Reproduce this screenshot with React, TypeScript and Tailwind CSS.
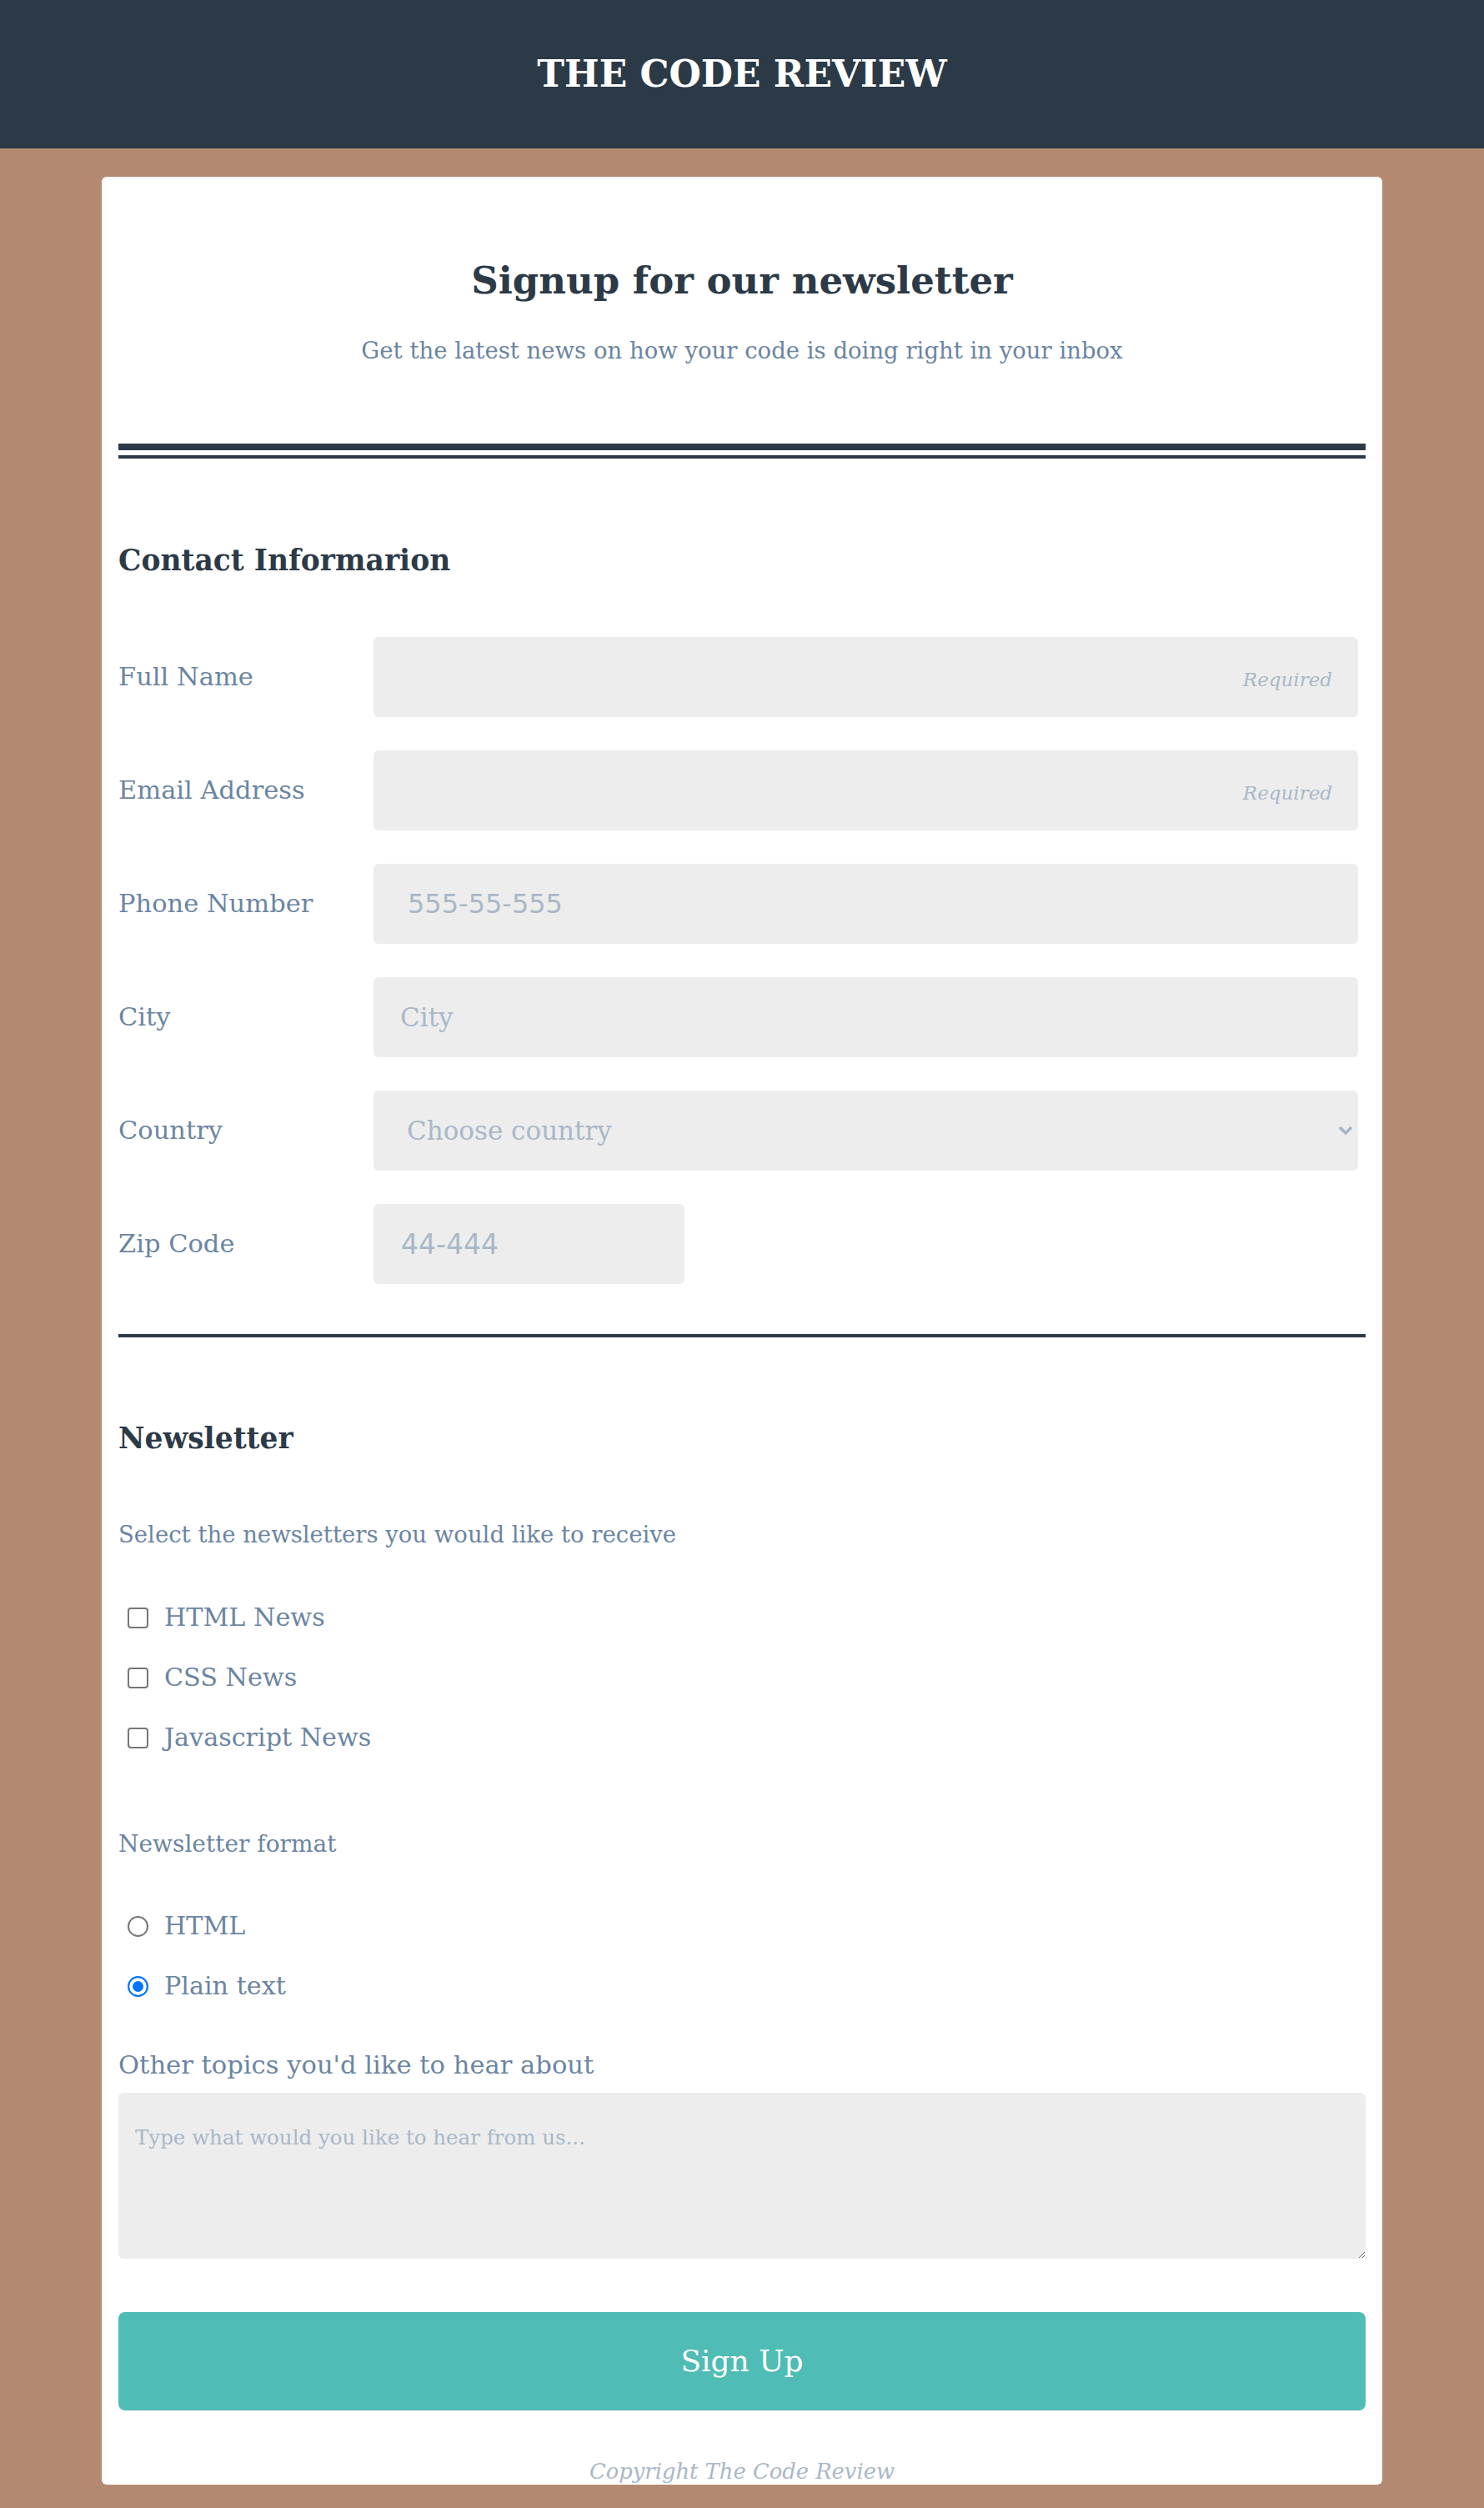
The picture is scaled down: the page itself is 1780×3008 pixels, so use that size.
import { useState } from "react";

const labelCls = "w-[306px] shrink-0 text-[30.5px] text-[#6b85a2]";
const inputCls =
  "h-[96px] bg-[#ededed] rounded-[6px] text-[31px] text-[#2c3a47] outline-none placeholder:text-[#a9b8c8]";

const Row = ({ label, children }: { label: string; children: React.ReactNode }) => (
  <div className="flex items-center">
    <label className={labelCls}>{label}</label>
    {children}
  </div>
);

const App = () => {
  const [format, setFormat] = useState("plain");

  return (
    <div className="min-h-[3008px] bg-[#b38a71] font-['DejaVu_Serif',serif]">
      {/* top bar */}
      <header className="h-[178px] bg-[#2c3a47] flex items-center justify-center">
        <h1 className="text-white text-[44px] font-bold leading-none">THE CODE REVIEW</h1>
      </header>

      <main className="w-[1536px] h-[2768px] mx-auto mt-[34px] bg-white rounded-[6px] px-[20px]">
        <div className="pt-[93px] text-center">
          <h2 className="text-[45px] leading-[64px] font-bold text-[#2c3a47]">Signup for our newsletter</h2>
          <p className="mt-[31px] text-[27.5px] leading-[40px] text-[#6b85a2]">
            Get the latest news on how your code is doing right in your inbox
          </p>
        </div>

        {/* double rule */}
        <div className="mt-[92px]">
          <div className="h-[8px] bg-[#2c3a47]" />
          <div className="h-[4px] mt-[6px] bg-[#2c3a47]" />
        </div>

        <h3 className="mt-[98px] text-[34.5px] leading-[48px] font-bold text-[#2c3a47]">Contact Informarion</h3>

        <div className="mt-[68px] flex flex-col gap-[40px]">
          <Row label="Full Name">
            <input className={`${inputCls} w-[1181px] pr-[31px] text-right placeholder:italic placeholder:text-[23px]`} placeholder="Required" />
          </Row>
          <Row label="Email Address">
            <input className={`${inputCls} w-[1181px] pr-[31px] text-right placeholder:italic placeholder:text-[23px]`} placeholder="Required" />
          </Row>
          <Row label="Phone Number">
            <input className={`${inputCls} w-[1181px] pl-[41px] font-['DejaVu_Sans',sans-serif] text-[32px]`} placeholder="555-55-555" />
          </Row>
          <Row label="City">
            <input className={`${inputCls} w-[1181px] pl-[32px]`} placeholder="City" />
          </Row>
          <Row label="Country">
            <div className="relative w-[1181px]">
              <select className={`${inputCls} w-full pl-[40px] appearance-none text-[#a9b8c8]`} defaultValue="">
                <option value="" disabled>Choose country</option>
                <option>Poland</option>
                <option>Germany</option>
                <option>United States</option>
              </select>
              <svg className="absolute right-[6px] top-[42px] pointer-events-none" width="18" height="12" viewBox="0 0 18 12">
                <path d="M2 2l7 7 7-7" fill="none" stroke="#a5b5c5" strokeWidth="3.5" />
              </svg>
            </div>
          </Row>
          <Row label="Zip Code">
            <input className={`${inputCls} w-[373px] pl-[33px] font-['DejaVu_Sans',sans-serif] text-[33px]`} placeholder="44-444" />
          </Row>
        </div>

        <div className="mt-[60px] h-[4px] bg-[#2c3a47]" />

        <h3 className="mt-[97px] text-[34.5px] leading-[48px] font-bold text-[#2c3a47]">Newsletter</h3>
        <p className="mt-[71px] text-[27.5px] leading-[40px] text-[#6b85a2]">Select the newsletters you would like to receive</p>

        <div className="mt-[44px]">
          {["HTML News", "CSS News", "Javascript News"].map((n) => (
            <label key={n} className="h-[72px] flex items-center text-[30.2px] text-[#6b85a2]">
              <input
                type="checkbox"
                className="appearance-none ml-[11px] mr-[19px] w-[25px] h-[25px] border-2 border-[#767676] rounded-[4px] bg-white checked:bg-[#0075ff] checked:border-[#0075ff]"
              />
              {n}
            </label>
          ))}
        </div>

        <p className="mt-[72px] text-[28px] leading-[40px] text-[#6b85a2]">Newsletter format</p>

        <div className="mt-[42px]">
          {[
            { v: "html", t: "HTML" },
            { v: "plain", t: "Plain text" },
          ].map((r) => (
            <label key={r.v} className="h-[72px] flex items-center text-[30.2px] text-[#6b85a2]">
              <input
                type="radio"
                name="format"
                checked={format === r.v}
                onChange={() => setFormat(r.v)}
                className="appearance-none ml-[11px] mr-[19px] w-[25px] h-[25px] rounded-full border-2 border-[#767676] bg-white checked:border-[#0075ff] checked:bg-[#0075ff] checked:shadow-[inset_0_0_0_4px_white]"
              />
              {r.t}
            </label>
          ))}
        </div>

        <label className="block mt-[39px] text-[30.6px] leading-[40px] text-[#6b85a2]">Other topics you'd like to hear about</label>
        <textarea
          className="block mt-[13px] w-full h-[199px] bg-[#ededed] rounded-[6px] px-[20px] pt-[36px] pb-[20px] text-[24.5px] outline-none placeholder:text-[#a9b8c8]"
          placeholder="Type what would you like to hear from us..."
        />

        <button className="mt-[64px] w-full h-[118px] rounded-[8px] bg-[#4fbcb5] text-white text-[36px]">Sign Up</button>

        <p className="mt-[56px] text-center italic text-[25.8px] leading-[34px] text-[#a9b8c8]">Copyright The Code Review</p>
      </main>
    </div>
  );
};

export default App;
